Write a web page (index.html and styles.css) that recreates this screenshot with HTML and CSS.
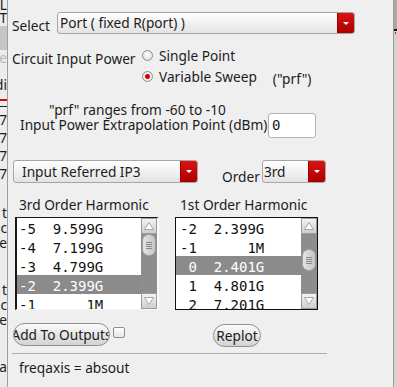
FILE: index.html
```html
<!DOCTYPE html>
<html lang="en">
<head>
  <meta charset="UTF-8">
  <title>IP3 Setup</title>
  <link rel="stylesheet" href="styles.css">
</head>
<body>
  <div class="screen">
    <!-- window behind, only its right edge shows -->
    <div class="behind-left">
      <div class="frag f1">L</div>
      <div class="frag f2">T</div>
      <div class="frag-block"></div>
      <div class="frag f3 faded">e</div>
      <div class="frag f4">Edi</div>
      <div class="frag-red"></div>
      <div class="frag-black"></div>
      <div class="frag f5">7</div>
      <div class="frag f5">7</div>
      <div class="frag f5">7</div>
      <div class="frag f5">7</div>
      <div class="frag f6">t</div>
      <div class="frag">c</div>
      <div class="frag">e</div>
      <div class="frag f7">t</div>
      <div class="frag">c</div>
      <div class="frag">e</div>
      <div class="frag f7">a</div>
    </div>

    <div class="panel">
      <div class="row row-select">
        <span class="select-label">Select</span>
        <div class="combo combo-port">
          <span class="combo-text">Port ( fixed R(port) )</span>
          <span class="combo-arrow"></span>
        </div>
      </div>

      <div class="row row-power">
        <span class="power-label">Circuit Input Power</span>
        <div class="radios">
          <div class="radio-item">
            <span class="radio"></span>
            <span>Single Point</span>
          </div>
          <div class="radio-item">
            <span class="radio on"></span>
            <span>Variable Sweep</span>
            <span class="prf-note">("prf")</span>
          </div>
        </div>
      </div>

      <div class="row row-range">"prf" ranges from -60 to -10</div>

      <div class="row row-extrap">
        <span class="extrap-label">Input Power Extrapolation Point (dBm)</span>
        <div class="entry">0</div>
      </div>

      <div class="row row-measure">
        <div class="combo combo-measure">
          <span class="combo-text">Input Referred IP3</span>
          <span class="combo-arrow"></span>
        </div>
        <span class="order-label">Order</span>
        <div class="combo combo-order">
          <span class="combo-text">3rd</span>
          <span class="combo-arrow"></span>
        </div>
      </div>

      <div class="row row-lists">
        <div class="list-col col-third">
          <div class="list-title">3rd Order Harmonic</div>
          <div class="listbox lb-third">
            <div class="items">
              <div class="item">-5  9.599G</div>
              <div class="item">-4  7.199G</div>
              <div class="item">-3  4.799G</div>
              <div class="item selected">-2  2.399G</div>
              <div class="item">-1      1M</div>
            </div>
            <div class="scrollbar">
              <svg class="arrow" width="16" height="16" viewBox="0 0 16 16">
                <rect x="0.5" y="0.5" width="15" height="15" fill="url(#btnfill)" stroke="#9c9c9c"/>
                <polygon points="3.5,11.5 8,4.5 12.5,11.5" fill="#fff" stroke="#a5a5a5"/>
              </svg>
              <div class="trough">
                <svg class="thumb" width="16" height="22" viewBox="0 0 16 22">
                  <rect x="1.5" y="0.5" width="13" height="21" rx="6" fill="url(#thumbfill)" stroke="#9a9a9a"/>
                  <path d="M5 8.5h6M5 10.5h6M5 12.5h6M5 14.5h6" stroke="#8a8a8a"/>
                </svg>
              </div>
              <svg class="arrow" width="16" height="16" viewBox="0 0 16 16">
                <rect x="0.5" y="0.5" width="15" height="15" fill="url(#btnfill)" stroke="#9c9c9c"/>
                <polygon points="3.5,4.5 8,11.5 12.5,4.5" fill="#fff" stroke="#a5a5a5"/>
              </svg>
            </div>
          </div>
        </div>

        <div class="list-col col-first">
          <div class="list-title">1st Order Harmonic</div>
          <div class="listbox lb-first">
            <div class="items">
              <div class="item">-2  2.399G</div>
              <div class="item">-1      1M</div>
              <div class="item selected"> 0  2.401G</div>
              <div class="item"> 1  4.801G</div>
              <div class="item"> 2  7.201G</div>
            </div>
            <div class="scrollbar">
              <svg class="arrow" width="16" height="16" viewBox="0 0 16 16">
                <rect x="0.5" y="0.5" width="15" height="15" fill="url(#btnfill)" stroke="#9c9c9c"/>
                <polygon points="3.5,11.5 8,4.5 12.5,11.5" fill="#fff" stroke="#a5a5a5"/>
              </svg>
              <div class="trough">
                <svg class="thumb thumb-first" width="16" height="22" viewBox="0 0 16 22">
                  <rect x="1.5" y="0.5" width="13" height="21" rx="6" fill="url(#thumbfill)" stroke="#9a9a9a"/>
                  <path d="M5 8.5h6M5 10.5h6M5 12.5h6M5 14.5h6" stroke="#8a8a8a"/>
                </svg>
              </div>
              <svg class="arrow" width="16" height="16" viewBox="0 0 16 16">
                <rect x="0.5" y="0.5" width="15" height="15" fill="url(#btnfill)" stroke="#9c9c9c"/>
                <polygon points="3.5,4.5 8,11.5 12.5,4.5" fill="#fff" stroke="#a5a5a5"/>
              </svg>
            </div>
          </div>
        </div>
      </div>

      <div class="row row-buttons">
        <div class="button btn-add"><span>Add To Outputs</span></div>
        <span class="checkbox"></span>
        <div class="button btn-replot"><span>Replot</span></div>
      </div>

      <div class="separator"></div>

      <div class="row row-status">freqaxis = absout</div>
    </div>

    <div class="behind-right">
      <div class="edge-block"></div>
      <div class="edge-black"></div>
      <div class="edge-red"></div>
    </div>
  </div>

  <!-- shared gradients for the scrollbar parts -->
  <svg width="0" height="0" class="defs">
    <defs>
      <linearGradient id="btnfill" x1="0" y1="0" x2="0" y2="1">
        <stop offset="0" stop-color="#f4f4f4"/>
        <stop offset="1" stop-color="#cdcdcd"/>
      </linearGradient>
      <linearGradient id="thumbfill" x1="0" y1="0" x2="1" y2="0">
        <stop offset="0" stop-color="#e6e6e6"/>
        <stop offset="1" stop-color="#c4c4c4"/>
      </linearGradient>
    </defs>
  </svg>
</body>
</html>
```

FILE: styles.css
```css
body {
  margin: 0;
  background: #efefef;
  font-family: "Noto Sans", sans-serif;
  font-size: 13.7px;
  color: #1c1c1c;
}

.screen {
  display: flex;
  width: 397px;
  height: 387px;
  overflow: hidden;
}

.defs {
  position: absolute;
}

/* window behind the dialog */
.behind-left {
  width: 7px;
  flex: none;
  border-right: 1px solid #9e9e9e;
  background: #ececec;
  overflow: hidden;
  line-height: 15px;
}

.frag {
  height: 15px;
  display: flex;
  justify-content: flex-end;
  white-space: nowrap;
}

.f1 { margin-top: -3px; height: 13px; }
.f2 { height: 16px; }
.f3 { height: 27px; }
.f4 { height: 20px; }
.f5 { height: 18px; }
.f6 { margin-top: 21px; }
.f7 { margin-top: 32px; }

.faded {
  color: #b8b8b8;
}

.frag-block {
  height: 24px;
  background: #c5c5c5;
}

.frag-red {
  height: 2px;
  margin-top: 2px;
  background: #d01010;
}

.frag-black {
  height: 1px;
  margin-top: 5px;
  margin-bottom: 5px;
  background: #222;
}

.behind-right {
  width: 3px;
  flex: none;
  border-left: 1px solid #9c9c9c;
  background: #d2d2d2;
}

.edge-block {
  height: 29px;
  background: #a9a9a9;
}

.edge-black {
  height: 2px;
  background: #111;
}

.edge-red {
  width: 1px;
  height: 2px;
  margin-top: 1px;
  margin-left: 1px;
  background: #d01010;
}

/* dialog */
.panel {
  width: 385px;
  flex: none;
  box-sizing: border-box;
  padding-left: 4px;
  display: flex;
  flex-direction: column;
  line-height: 19px;
}

.row {
  display: flex;
  align-items: flex-start;
  white-space: nowrap;
}

.combo {
  box-sizing: border-box;
  display: flex;
  border: 1px solid #a6a6a6;
  border-radius: 3px;
  background: linear-gradient(#ffffff, #e3e3e3);
  overflow: hidden;
}

.combo-text {
  flex: 1;
  overflow: hidden;
}

.combo-arrow {
  width: 16px;
  flex: none;
  display: flex;
  align-items: center;
  justify-content: center;
  background: linear-gradient(#dc1212, #a90000);
  border-left: 1px solid #9a0000;
}

.combo-arrow::after {
  content: "";
  border-left: 3px solid transparent;
  border-right: 3px solid transparent;
  border-top: 3px solid #ffffff;
}

.row-select {
  margin-top: 12px;
  height: 22px;
}

.select-label {
  width: 45px;
  margin-top: 4px;
}

.combo-port {
  width: 298px;
  height: 22px;
}

.combo-port .combo-text {
  padding-left: 2px;
}

.row-power {
  margin-top: 12px;
  height: 40px;
}

.power-label {
  width: 130px;
  margin-top: 3px;
}

.radios {
  display: flex;
  flex-direction: column;
  gap: 2px;
}

.radio-item {
  display: flex;
  align-items: flex-start;
  height: 19px;
}

.radio {
  width: 11px;
  height: 11px;
  margin-top: 4px;
  margin-right: 6px;
  box-sizing: border-box;
  border: 1px solid #8e8e8e;
  border-radius: 50%;
  background: radial-gradient(circle at 50% 35%, #ffffff, #d6d6d6);
}

.radio.on {
  background: radial-gradient(circle, #e00000 0, #d00000 2px, #f4f4f4 3px, #d8d8d8 100%);
}

.prf-note {
  margin-left: 16px;
  margin-top: 2px;
}

.row-range {
  margin-top: 14px;
  padding-left: 37px;
}

.row-extrap {
  margin-top: -6px;
  height: 25px;
}

.extrap-label {
  width: 248px;
  margin-left: 8px;
  margin-top: 2px;
}

.entry {
  width: 48px;
  height: 25px;
  box-sizing: border-box;
  border: 1px solid #b4b4b4;
  border-radius: 3px;
  background: #ffffff;
  padding: 2px 0 0 3px;
  font-family: "DejaVu Sans Mono", monospace;
  font-size: 14px;
}

.row-measure {
  margin-top: 22px;
  height: 23px;
}

.combo-measure {
  width: 185px;
  height: 23px;
  margin-left: 1px;
}

.combo-measure .combo-text {
  padding: 1px 0 0 8px;
}

.order-label {
  margin-left: 24px;
  margin-top: 7px;
}

.combo-order {
  width: 64px;
  height: 23px;
  margin-left: 2px;
}

.combo-order .combo-text {
  padding: 1px 0 0 1px;
}

.row-lists {
  margin-top: 12px;
  margin-left: 3px;
  gap: 16px;
}

.list-col {
  display: flex;
  flex-direction: column;
}

.col-third {
  width: 144px;
}

.col-first {
  width: 143px;
}

.col-third .list-title {
  padding-left: 4px;
}

.col-first .list-title {
  padding-left: 5px;
}

.listbox {
  margin-top: 3px;
  height: 93px;
  box-sizing: border-box;
  display: flex;
  background: #ffffff;
  font-family: "DejaVu Sans Mono", monospace;
  font-size: 14px;
  color: #111;
}

.lb-third {
  border-top: 1px solid #1a1a1a;
  border-left: 2px solid #1a1a1a;
  border-bottom: 1px solid #f6f6f6;
  border-right: 2px solid #fafafa;
}

.lb-first {
  border: 1px solid #111;
}

.items {
  flex: 1;
  overflow: hidden;
}

.item {
  height: 19px;
  box-sizing: border-box;
  padding: 3px 0 0 4px;
  line-height: 16px;
  white-space: pre;
}

.lb-third .item {
  padding-left: 2px;
}

.item.selected {
  background: #8b8b8b;
  color: #ffffff;
}

.scrollbar {
  width: 16px;
  flex: none;
  display: flex;
  flex-direction: column;
  background: #8d8d8d;
}

.arrow {
  display: block;
  flex: none;
}

.trough {
  flex: 1;
}

.thumb {
  display: block;
}

.thumb-first {
  margin-top: 15px;
}

.row-buttons {
  margin-top: 13px;
  height: 24px;
}

.button {
  height: 23px;
  box-sizing: border-box;
  display: flex;
  justify-content: center;
  overflow: hidden;
  border: 1px solid #8e8e8e;
  border-radius: 12px;
  background: linear-gradient(#fbfbfb, #d3d3d3);
  padding-top: 1px;
}

.btn-add {
  width: 97px;
  margin-left: 1px;
}

.checkbox {
  width: 12px;
  height: 11px;
  box-sizing: border-box;
  margin-left: 3px;
  margin-top: 4px;
  border: 1px solid #8e8e8e;
  border-radius: 2px;
  background: linear-gradient(#ffffff, #e6e6e6);
}

.btn-replot {
  width: 48px;
  margin-left: 88px;
  margin-top: 1px;
}

.separator {
  width: 315px;
  height: 1px;
  margin-top: 6px;
  background: #adadad;
}

.row-status {
  margin-top: 4px;
  padding-left: 7px;
}
```
